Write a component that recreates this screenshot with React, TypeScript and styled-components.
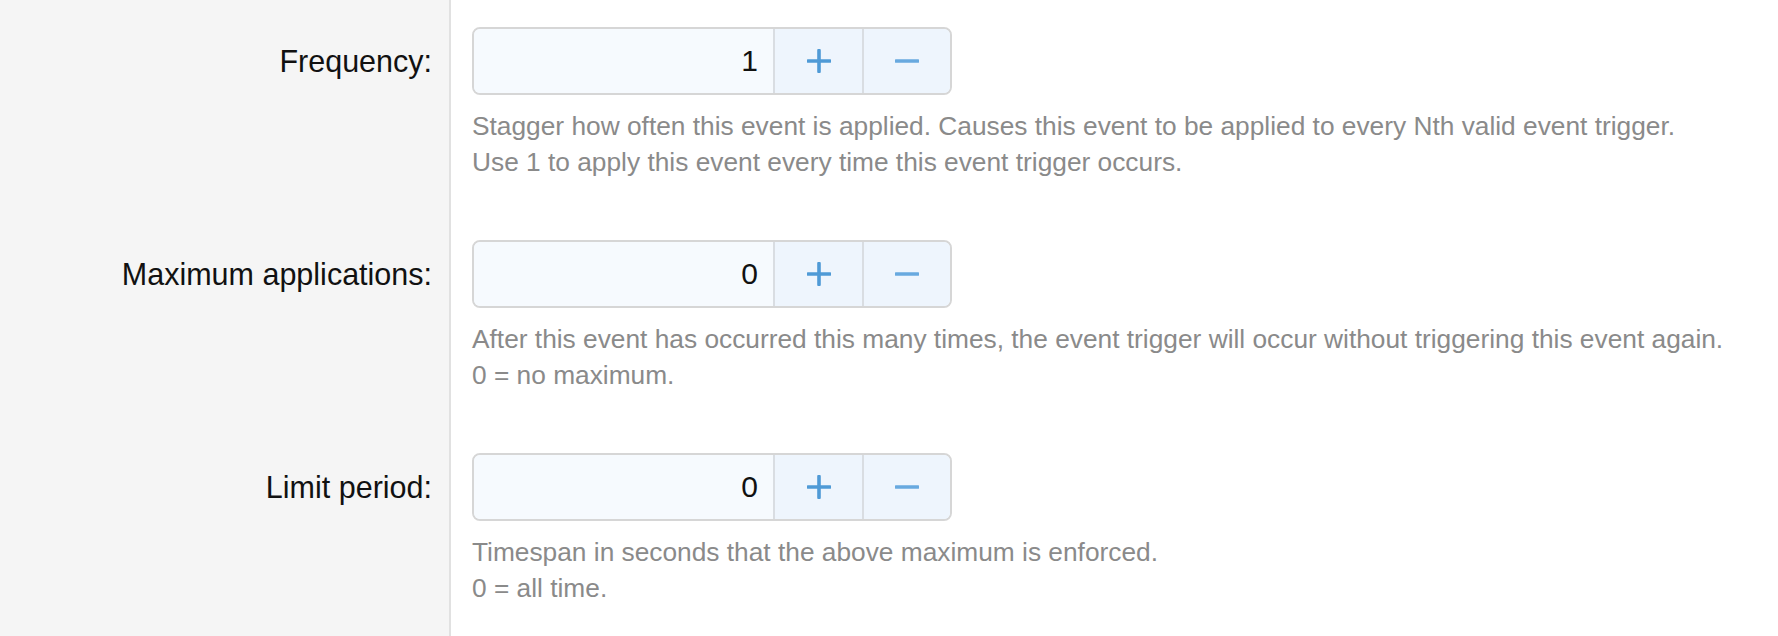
import React from "react";
import styled, { createGlobalStyle } from "styled-components";

const GlobalStyle = createGlobalStyle`
  html, body {
    margin: 0;
    padding: 0;
    background: #ffffff;
    font-family: "Liberation Sans", Arial, Helvetica, sans-serif;
  }
  * { box-sizing: border-box; }
`;

const Form = styled.div`
  width: 1778px;
  height: 636px;
  overflow: hidden;
  display: flex;
  flex-direction: column;
  background: linear-gradient(to right, #f5f5f5 0, #f5f5f5 449px, #e1e1e1 449px, #e1e1e1 451px, #ffffff 451px);
`;

const Row = styled.div`
  display: grid;
  grid-template-columns: 451px 1fr;
  padding: 27px 0 33px;
`;

const Label = styled.label`
  height: 68px;
  line-height: 68px;
  text-align: right;
  padding-right: 19px;
  font-size: 30.5px;
  color: #111111;
`;

const Field = styled.div`
  padding-left: 21px;
  display: flex;
  flex-direction: column;
`;

const Spinner = styled.div`
  display: flex;
  width: 480px;
  height: 68px;
  border: 2px solid #d6d6d6;
  border-radius: 8px;
  overflow: hidden;
  background: #f6fafe;
`;

const ValueInput = styled.input`
  width: 299px;
  height: 100%;
  border: none;
  outline: none;
  background: #f6fafe;
  text-align: right;
  padding: 0 15px 0 0;
  font-family: "Liberation Sans", Arial, Helvetica, sans-serif;
  font-size: 30px;
  color: #111111;
`;

const StepButton = styled.button<{ $w: number }>`
  width: ${(p) => p.$w}px;
  height: 100%;
  border: none;
  border-left: 2px solid #d9dde2;
  background: #eef5fd;
  display: flex;
  align-items: center;
  justify-content: center;
  padding: 0;
  cursor: pointer;
`;

const Help = styled.p`
  margin: 13px 0 0;
  font-size: 26.3px;
  line-height: 36px;
  color: #8a8a8a;
`;

const PlusIcon = () => (
  <svg width="24" height="24" viewBox="0 0 24 24">
    <path d="M12 1.5v21M1 12h22" stroke="#4f9ad6" strokeWidth="3.6" strokeLinecap="round" fill="none" />
  </svg>
);

const MinusIcon = () => (
  <svg width="24" height="24" viewBox="0 0 24 24">
    <path d="M1 12h22" stroke="#68a9df" strokeWidth="3.6" strokeLinecap="round" fill="none" />
  </svg>
);

type RowData = { label: string; value: string; help: string[] };

const rows: RowData[] = [
  {
    label: "Frequency:",
    value: "1",
    help: [
      "Stagger how often this event is applied. Causes this event to be applied to every Nth valid event trigger.",
      "Use 1 to apply this event every time this event trigger occurs.",
    ],
  },
  {
    label: "Maximum applications:",
    value: "0",
    help: [
      "After this event has occurred this many times, the event trigger will occur without triggering this event again.",
      "0 = no maximum.",
    ],
  },
  {
    label: "Limit period:",
    value: "0",
    help: ["Timespan in seconds that the above maximum is enforced.", "0 = all time."],
  },
];

export default function App() {
  return (
    <>
      <GlobalStyle />
      <Form>
        {rows.map((r) => (
          <Row key={r.label}>
            <Label>{r.label}</Label>
            <Field>
              <Spinner>
                <ValueInput defaultValue={r.value} />
                <StepButton $w={90} aria-label="increase">
                  <PlusIcon />
                </StepButton>
                <StepButton $w={89} aria-label="decrease">
                  <MinusIcon />
                </StepButton>
              </Spinner>
              <Help>
                {r.help[0]}
                <br />
                {r.help[1]}
              </Help>
            </Field>
          </Row>
        ))}
      </Form>
    </>
  );
}
